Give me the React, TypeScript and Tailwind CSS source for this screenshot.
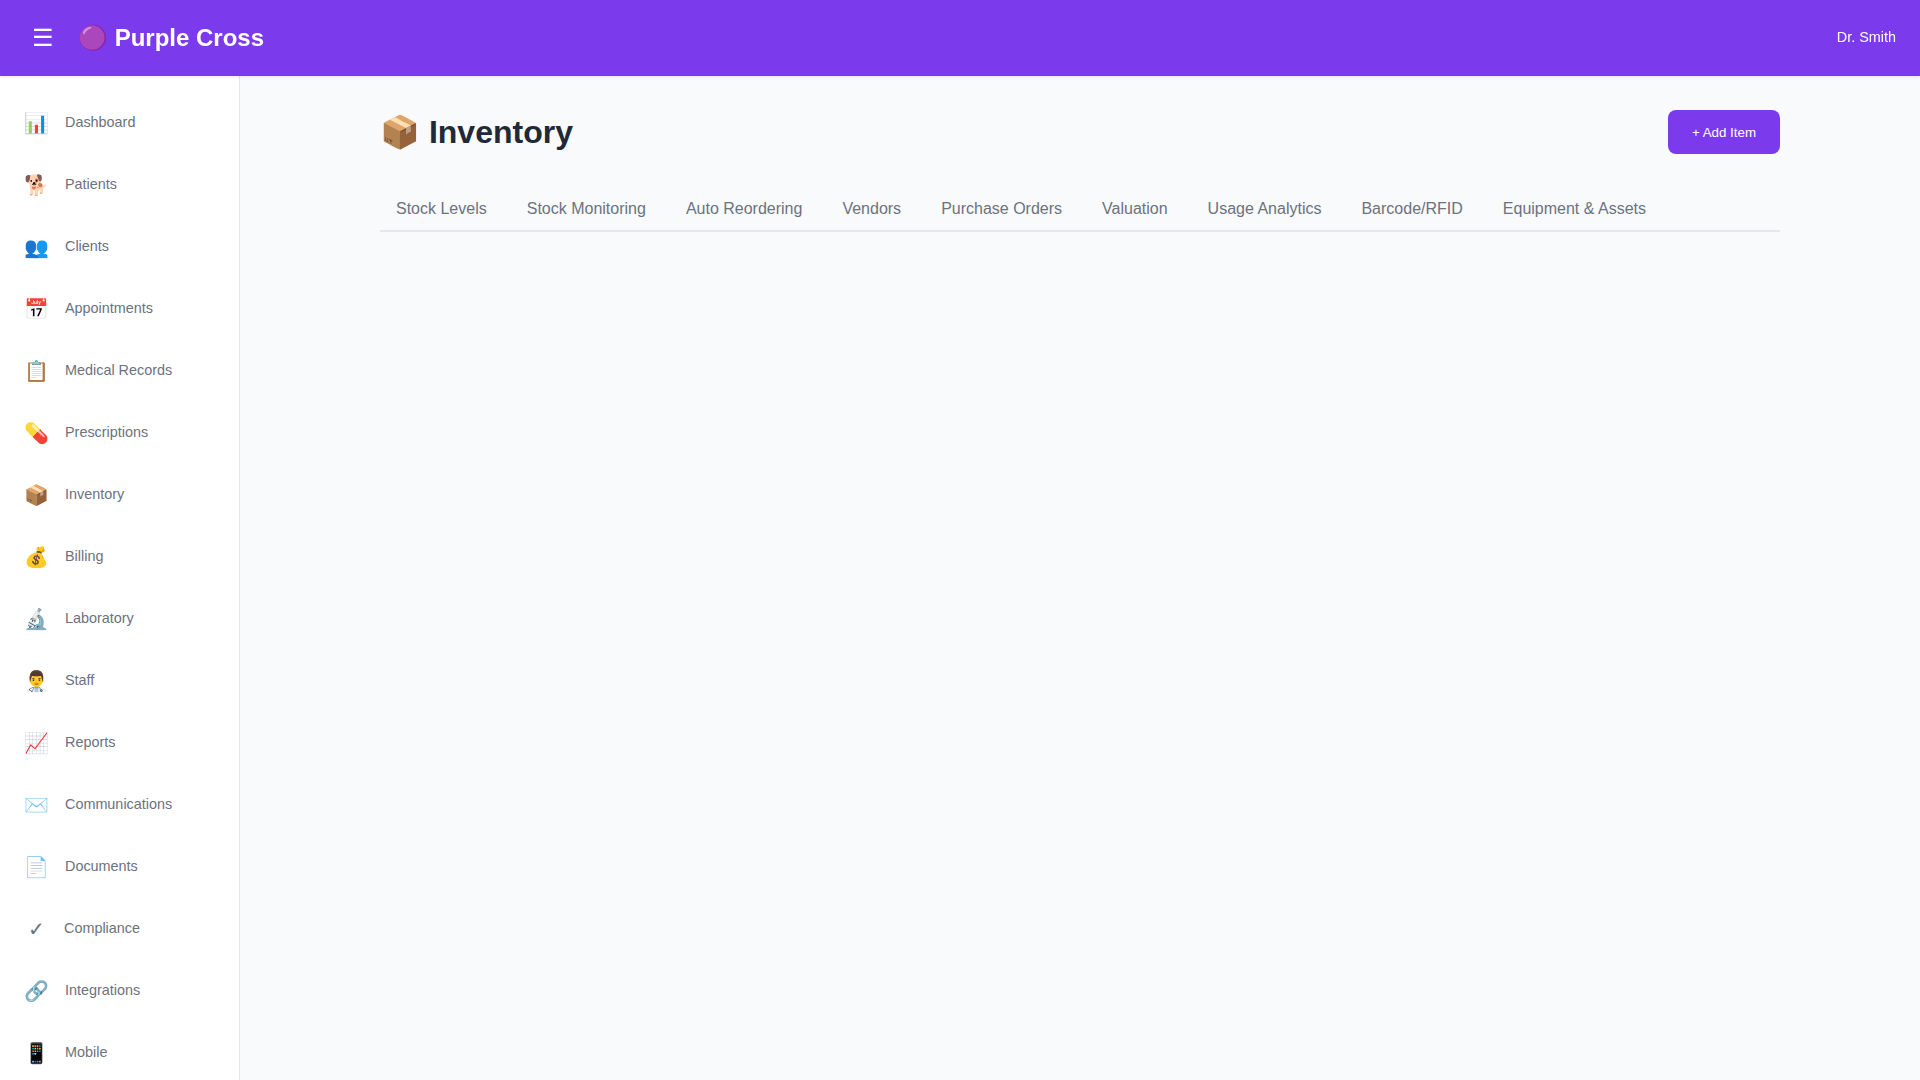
const navItems = [
  { icon: '📊', label: 'Dashboard' },
  { icon: '🐕', label: 'Patients' },
  { icon: '👥', label: 'Clients' },
  { icon: '📅', label: 'Appointments' },
  { icon: '📋', label: 'Medical Records' },
  { icon: '💊', label: 'Prescriptions' },
  { icon: '📦', label: 'Inventory' },
  { icon: '💰', label: 'Billing' },
  { icon: '🔬', label: 'Laboratory' },
  { icon: '👨‍⚕️', label: 'Staff' },
  { icon: '📈', label: 'Reports' },
  { icon: '✉️', label: 'Communications' },
  { icon: '📄', label: 'Documents' },
  { icon: '✓', label: 'Compliance' },
  { icon: '🔗', label: 'Integrations' },
  { icon: '📱', label: 'Mobile' },
];

const tabs = [
  'Stock Levels',
  'Stock Monitoring',
  'Auto Reordering',
  'Vendors',
  'Purchase Orders',
  'Valuation',
  'Usage Analytics',
  'Barcode/RFID',
  'Equipment & Assets',
];

export default function App() {
  return (
    <div className="flex h-screen flex-col overflow-hidden bg-[#f9fafb] font-['Liberation_Sans',sans-serif]">
      <header className="z-10 flex h-[76px] shrink-0 items-center justify-between bg-[#7c3aed] px-6 text-white shadow-[0_1px_3px_rgba(0,0,0,0.1)]">
        <div className="flex items-center gap-4">
          <button className="px-2 text-2xl leading-none text-white">☰</button>
          <h1 className="text-2xl font-bold">🟣 Purple Cross</h1>
        </div>
        <span className="text-[14.4px]">Dr. Smith</span>
      </header>

      <div className="flex min-h-0 flex-1">
        <aside className="w-[240px] shrink-0 overflow-y-auto border-r border-[#e5e7eb] bg-white py-4">
          <nav className="flex flex-col">
            {navItems.map((item) => (
              <a key={item.label} className="flex items-center gap-4 px-6 py-[15px] text-[14.4px] text-[#6b7280]">
                <span className="min-w-6 text-center text-xl leading-8">{item.icon}</span>
                <span>{item.label}</span>
              </a>
            ))}
          </nav>
        </aside>

        <main className="min-w-0 flex-1 overflow-y-auto bg-[#f9fafb] p-8">
          <div className="mx-auto max-w-[1400px]">
            <div className="mb-8 flex items-center justify-between">
              <h2 className="text-[32px] leading-12 font-bold text-[#1f2937]">📦 Inventory</h2>
              <button className="rounded-lg bg-[#7c3aed] px-6 pt-[13px] pb-[11px] text-[13.33px] leading-5 font-medium text-white">+ Add Item</button>
            </div>
            <div className="flex gap-2 border-b-2 border-[#e5e7eb]">
              {tabs.map((tab) => (
                <button key={tab} className="px-4 py-[9px] text-base leading-6 font-medium text-[#6b7280]">
                  {tab}
                </button>
              ))}
            </div>
          </div>
        </main>
      </div>
    </div>
  );
}
